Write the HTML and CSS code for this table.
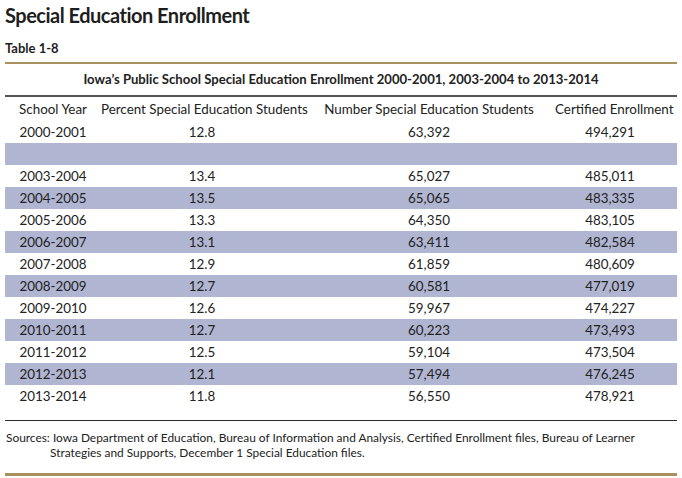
FILE: index.html
```html
<!DOCTYPE html>
<html>
<head>
<meta charset="utf-8">
<link rel="stylesheet" href="styles.css">
</head>
<body>
<div class="page">
  <h1 class="title">Special Education Enrollment</h1>
  <div class="table-label">Table 1-8</div>
  <div class="table-wrap">
    <div class="caption">Iowa’s Public School Special Education Enrollment 2000-2001, 2003-2004 to 2013-2014</div>
    <table class="data">
      <colgroup>
        <col class="c1"><col class="c2"><col class="c3"><col class="c4">
      </colgroup>
      <thead>
        <tr><th>School Year</th><th>Percent Special Education Students</th><th>Number Special Education Students</th><th>Certified Enrollment</th></tr>
      </thead>
      <tbody>
        <tr><td>2000-2001</td><td>12.8</td><td>63,392</td><td>494,291</td></tr>
        <tr class="shade"><td>&nbsp;</td><td></td><td></td><td></td></tr>
        <tr><td>2003-2004</td><td>13.4</td><td>65,027</td><td>485,011</td></tr>
        <tr class="shade"><td>2004-2005</td><td>13.5</td><td>65,065</td><td>483,335</td></tr>
        <tr><td>2005-2006</td><td>13.3</td><td>64,350</td><td>483,105</td></tr>
        <tr class="shade"><td>2006-2007</td><td>13.1</td><td>63,411</td><td>482,584</td></tr>
        <tr><td>2007-2008</td><td>12.9</td><td>61,859</td><td>480,609</td></tr>
        <tr class="shade"><td>2008-2009</td><td>12.7</td><td>60,581</td><td>477,019</td></tr>
        <tr><td>2009-2010</td><td>12.6</td><td>59,967</td><td>474,227</td></tr>
        <tr class="shade"><td>2010-2011</td><td>12.7</td><td>60,223</td><td>473,493</td></tr>
        <tr><td>2011-2012</td><td>12.5</td><td>59,104</td><td>473,504</td></tr>
        <tr class="shade"><td>2012-2013</td><td>12.1</td><td>57,494</td><td>476,245</td></tr>
        <tr><td>2013-2014</td><td>11.8</td><td>56,550</td><td>478,921</td></tr>
      </tbody>
    </table>
    <div class="sources">Sources: Iowa Department of Education, Bureau of Information and Analysis, Certified Enrollment files, Bureau of Learner Strategies and Supports, December 1 Special Education files.</div>
  </div>
</div>
</body>
</html>
```

FILE: styles.css
```css
html, body {
  margin: 0;
  padding: 0;
  background: #ffffff;
}
body {
  font-family: "Lato", "Open Sans", sans-serif;
  color: #222222;
}
.page {
  width: 672px;
  padding: 0 5px;
}
.title {
  margin: 0;
  padding-top: 2px;
  font-size: 20px;
  line-height: 26px;
  font-weight: 700;
  letter-spacing: -0.5px;
  color: #1e1e1e;
}
.table-label {
  margin-top: 12px;
  font-size: 13px;
  line-height: 16px;
  font-weight: 700;
  color: #1e1e1e;
}
.table-wrap {
  margin-top: 6px;
  border-top: 2.5px solid #a8915e;
  border-bottom: 3px solid #a8915e;
}
.caption {
  text-align: center;
  font-weight: 700;
  font-size: 13.1px;
  line-height: 31px;
  border-bottom: 2px solid #555555;
}
.data {
  width: 672px;
  border-collapse: collapse;
  table-layout: fixed;
  border-bottom: 1.5px solid #2a2a2a;
}
.c1 { width: 96px; }
.c2 { width: 202px; }
.c3 { width: 252px; }
.c4 { width: 122px; }
.data th,
.data td {
  padding: 0;
  height: 22px;
  line-height: 22px;
  font-size: 13.4px;
  font-weight: 400;
  text-align: center;
  white-space: nowrap;
}
.data th:last-child,
.data td:last-child {
  padding-right: 12px;
}
.data th {
  height: 24px;
  line-height: 24px;
}
.data tbody tr:last-child td {
  height: 35px;
  vertical-align: top;
}
.data tr.shade td {
  background: #b0b5d1;
}
.sources {
  font-size: 11.9px;
  line-height: 15px;
  padding: 9px 0 13px 44px;
  text-indent: -44px;
  margin-left: 1px;
}
```
